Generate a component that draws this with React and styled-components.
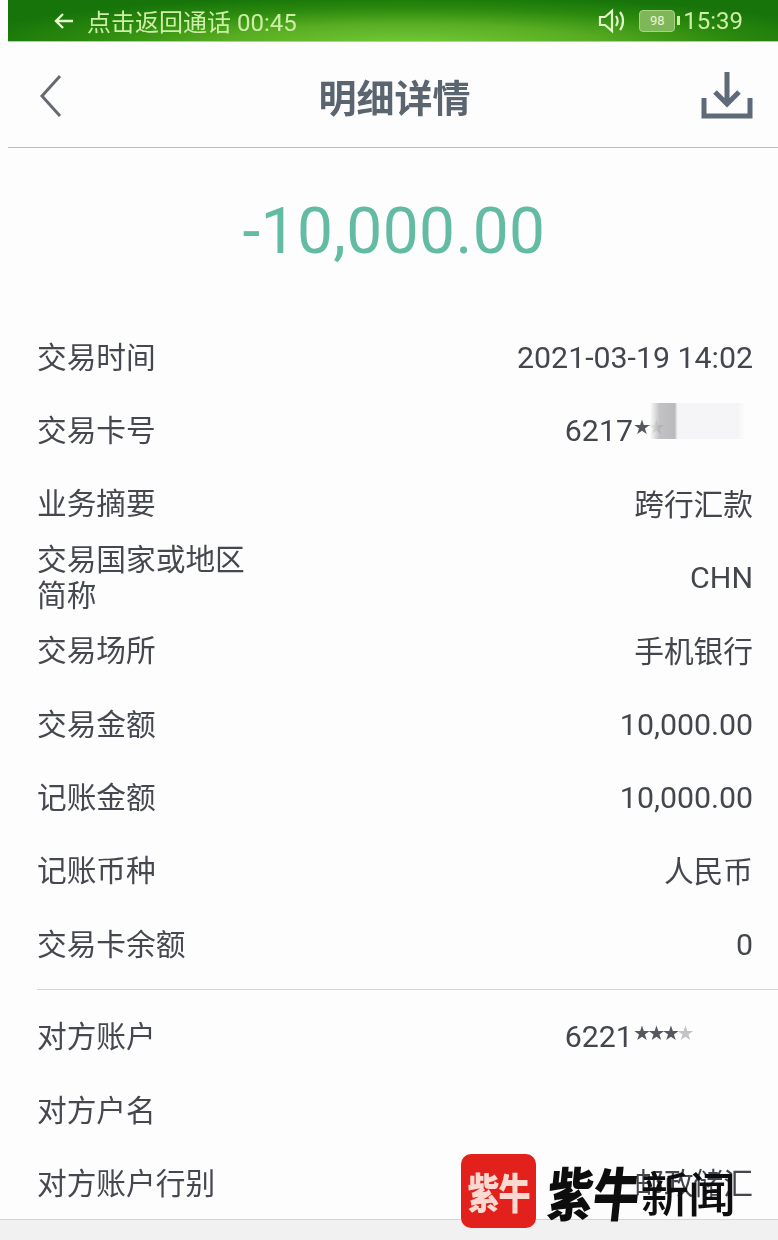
import React from 'react';
import styled, { createGlobalStyle } from 'styled-components';

const GlobalStyle = createGlobalStyle`
  html, body {
    margin: 0;
    padding: 0;
    background: #fdfdfe;
  }
  body {
    font-family: Roboto, "Noto Sans CJK SC", sans-serif;
  }
`;

const Page = styled.div`
  width: 778px;
  height: 1240px;
  position: relative;
  overflow: hidden;
  display: flex;
  flex-direction: column;
  filter: blur(0.45px);
`;

const StatusBar = styled.div`
  margin-left: 8px;
  height: 41px;
  flex: none;
  display: flex;
  align-items: center;
  justify-content: space-between;
  padding: 0 35px 0 46px;
  color: #cdeea6;
  font-size: 24px;
  background: radial-gradient(ellipse 58% 120% at 52% 108%, #74cb38 0%, #58ad22 42%, #2c8a0e 72%, #16740a 100%);
  border-bottom: 1px solid #a6dc7e;
`;

const StatusGroup = styled.div`
  display: flex;
  align-items: center;
  gap: ${(p) => p.$gap}px;
`;

const CallText = styled.span`
  margin-left: -3px;
`;

const Battery = styled.div`
  width: 34px;
  height: 20px;
  border-radius: 4px;
  background: #7fb657;
  border: 1px solid #a9d485;
  color: #e8f6d4;
  font-size: 13px;
  line-height: 20px;
  text-align: center;
  position: relative;
  &::after {
    content: "";
    position: absolute;
    right: -6px;
    top: 5px;
    width: 3px;
    height: 9px;
    background: #cdeea6;
  }
`;

const ClockText = styled.span`
  margin-left: -5px;
`;

const Header = styled.header`
  margin-left: 8px;
  height: 106px;
  flex: none;
  box-sizing: border-box;
  display: flex;
  align-items: center;
  justify-content: space-between;
  padding: 2px 25px 0 30px;
  border-bottom: 1px solid #b9bbbe;
`;

const Title = styled.h1`
  margin: 0 0 0 24px;
  font-size: 38px;
  font-weight: 700;
  color: #5a6570;
  font-family: "Noto Sans CJK SC", sans-serif;
`;

const Amount = styled.div`
  height: 171px;
  flex: none;
  box-sizing: border-box;
  padding: 40px 0 0 10px;
  text-align: center;
  font-size: 64px;
  line-height: 88px;
  color: #62bba2;
  letter-spacing: 0.4px;
`;

const List = styled.section`
  flex: none;
`;

const Row = styled.div`
  height: 73.4px;
  box-sizing: border-box;
  display: flex;
  align-items: center;
  justify-content: space-between;
  padding: 0 25px 0 37px;
  color: #43464c;
`;

const Label = styled.div`
  font-family: "Noto Sans CJK SC", sans-serif;
  font-size: 29.7px;
  line-height: 36px;
  width: 216px;
  color: #45484e;
`;

const Value = styled.div`
  display: flex;
  align-items: center;
  padding-right: ${(p) => p.$inset || 0}px;
  margin-top: ${(p) => (p.$cjk ? 0 : 3)}px;
  font-size: ${(p) => (p.$cjk ? 29.7 : 30.3)}px;
  font-family: ${(p) => (p.$cjk ? '"Noto Sans CJK SC", sans-serif' : 'Roboto, sans-serif')};
`;

const Stars = styled.span`
  font-family: "DejaVu Sans", sans-serif;
  font-size: 20px;
  letter-spacing: -3.4px;
  line-height: 1;
  color: ${(p) => p.$color};
  margin-bottom: 8px;
`;

const Smudge = styled.span`
  width: 95px;
  height: 36px;
  margin: 0 0 20px -12px;
  background: linear-gradient(90deg, #fdfdfe 0%, #bcbcbe 10%, #b3b3b5 26%, #f4f4f6 29%, #f4f4f6 92%, #fdfdfe 100%);
  opacity: 0.9;
`;

const Divider = styled.hr`
  margin: 9px 0 9px 37px;
  border: 0;
  height: 1px;
  background: #d4d5d7;
`;

const Footer = styled.div`
  flex: 1;
  background: #f1f1f2;
  border-top: 1px solid #d3d3d4;
`;

/* watermark sits on top of the last row */
const Watermark = styled.div`
  position: absolute;
  left: 461px;
  top: 1154px;
  display: flex;
  align-items: center;
  gap: 12px;
  font-family: "Noto Sans CJK SC", sans-serif;
  font-weight: 900;
`;

const WatermarkBadge = styled.div`
  width: 75px;
  height: 74px;
  border-radius: 10px;
  background: #e2211c;
  color: #fbd8d0;
  font-size: 32px;
  display: flex;
  align-items: center;
  justify-content: center;
  letter-spacing: -1px;
`;

const BadgeText = styled.span`
  transform: scaleY(1.3);
`;

const WatermarkText = styled.div`
  display: flex;
  align-items: center;
  color: #0d0d0d;
`;

const BrushName = styled.span`
  font-size: 46px;
  line-height: 60px;
  transform: skewX(-6deg) scaleY(1.25);
`;

const NewsName = styled.span`
  font-size: 48px;
  font-weight: 500;
  line-height: 60px;
  margin-left: 1px;
  letter-spacing: -1px;
`;

const BackIcon = () => (
  <svg width="26" height="44" viewBox="0 0 26 44" fill="none">
    <path d="M22 2 L4 22 L22 42" stroke="#666b72" strokeWidth="3" />
  </svg>
);

const DownloadIcon = () => (
  <svg width="52" height="50" viewBox="0 0 52 50" fill="none">
    <path d="M26 1 V31 M14 21 L26 33 L38 21" stroke="#5e6a78" strokeWidth="5" />
    <path d="M3 27 V45 H49 V27" stroke="#5e6a78" strokeWidth="5" />
  </svg>
);

const ArrowIcon = () => (
  <svg width="20" height="18" viewBox="0 0 20 18" fill="none">
    <path d="M19 9 H3 M9 2 L2 9 L9 16" stroke="#e4f6cc" strokeWidth="2.4" />
  </svg>
);

const SpeakerIcon = () => (
  <svg width="28" height="26" viewBox="0 0 28 26" fill="none">
    <path d="M2 9 H7 L14 3 V23 L7 17 H2 Z" stroke="#e4f6cc" strokeWidth="2.2" />
    <path d="M18 8 C20 11 20 15 18 18 M22 4 C26 9 26 17 22 22" stroke="#e4f6cc" strokeWidth="2.2" />
  </svg>
);

const rowsA = [
  { label: '交易时间', value: '2021-03-19 14:02' },
  { label: '交易卡号', card: true },
  { label: '业务摘要', value: '跨行汇款', cjk: true },
  { label: '交易国家或地区简称', value: 'CHN' },
  { label: '交易场所', value: '手机银行', cjk: true },
  { label: '交易金额', value: '10,000.00' },
  { label: '记账金额', value: '10,000.00' },
  { label: '记账币种', value: '人民币', cjk: true },
  { label: '交易卡余额', value: '0' },
];

const App = () => {
  return (
    <Page>
      <GlobalStyle />
      <StatusBar>
        <StatusGroup $gap={16}>
          <ArrowIcon />
          <CallText>点击返回通话 00:45</CallText>
        </StatusGroup>
        <StatusGroup $gap={13}>
          <SpeakerIcon />
          <Battery>98</Battery>
          <ClockText>15:39</ClockText>
        </StatusGroup>
      </StatusBar>

      <Header>
        <BackIcon />
        <Title>明细详情</Title>
        <DownloadIcon />
      </Header>

      <Amount>-10,000.00</Amount>

      <List>
        {rowsA.map((row) => (
          <Row key={row.label}>
            <Label>{row.label}</Label>
            {row.card ? (
              <Value $inset={8}>
                6217<Stars $color="#55585e">★★</Stars>
                <Smudge />
              </Value>
            ) : (
              <Value $cjk={row.cjk}>{row.value}</Value>
            )}
          </Row>
        ))}
        <Divider />
        <Row>
          <Label>对方账户</Label>
          <Value $inset={62}>
            6221<Stars $color="#55585e">★★★</Stars>
            <Stars $color="#c4c4c6">★</Stars>
          </Value>
        </Row>
        <Row>
          <Label>对方户名</Label>
        </Row>
        <Row>
          <Label>对方账户行别</Label>
          <Value $cjk>邮政储汇</Value>
        </Row>
      </List>

      <Footer />

      <Watermark>
        <WatermarkBadge>
          <BadgeText>紫牛</BadgeText>
        </WatermarkBadge>
        <WatermarkText>
          <BrushName>紫牛</BrushName>
          <NewsName>新闻</NewsName>
        </WatermarkText>
      </Watermark>
    </Page>
  );
};

export default App;
